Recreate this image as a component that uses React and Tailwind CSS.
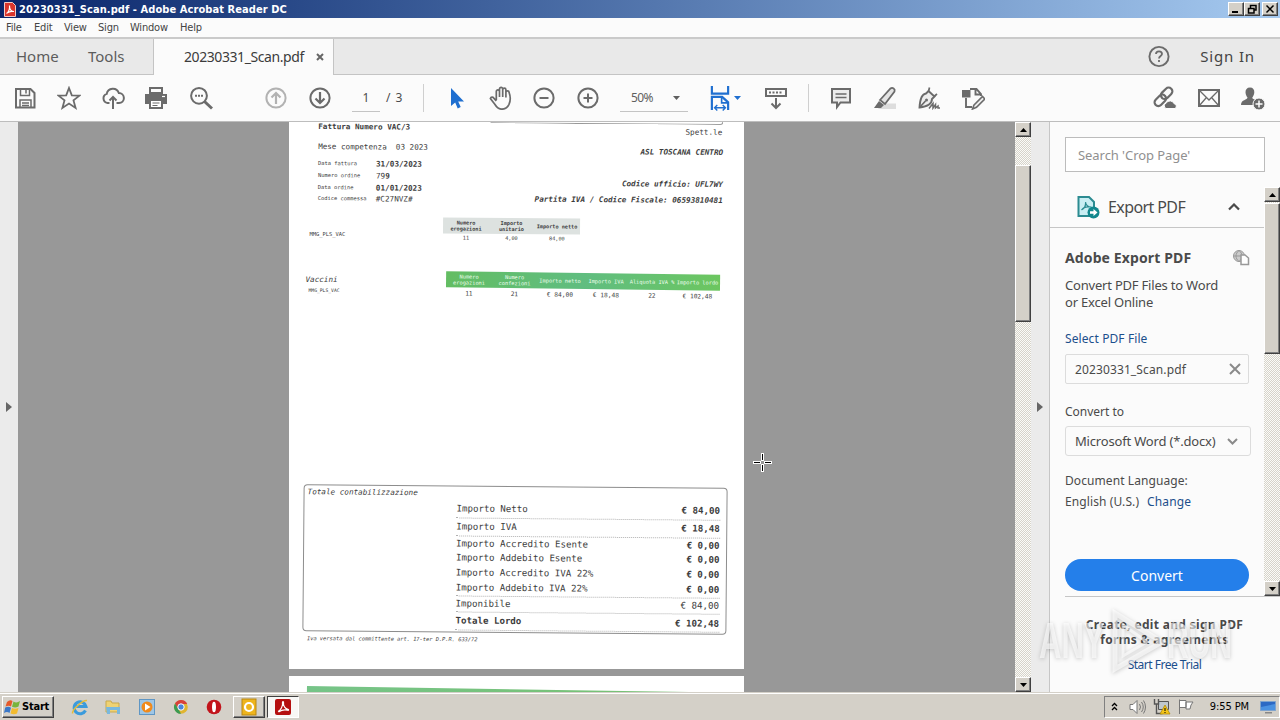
import React, { useState } from 'react';

const MENUS = [
  ['File', 'w-[28px]'],
  ['Edit', 'w-[30px]'],
  ['View', 'w-[34px]'],
  ['Sign', 'w-[32px]'],
  ['Window', 'w-[50px]'],
  ['Help', 'w-[30px]']
];

const TOTALS = [
  { label: 'Importo Netto', value: '€ 84,00', row: 'h-[18px] border-b', valueClass: 'font-bold' },
  { label: 'Importo IVA', value: '€ 18,48', row: 'h-[18px] border-b', valueClass: 'font-bold' },
  { label: 'Importo Accredito Esente', value: '€ 0,00', row: 'h-[14.300px]', valueClass: 'font-bold' },
  { label: 'Importo Addebito Esente', value: '€ 0,00', row: 'h-[15px]', valueClass: 'font-bold' },
  { label: 'Importo Accredito IVA 22%', value: '€ 0,00', row: 'h-[15px]', valueClass: 'font-bold' },
  { label: 'Importo Addebito IVA 22%', value: '€ 0,00', row: 'h-[15.700px] border-b', valueClass: 'font-bold' },
  { label: 'Imponibile', value: '€ 84,00', row: 'h-[16.500px] border-b', valueClass: '' },
  { label: 'Totale Lordo', value: '€ 102,48', row: 'h-[18px] border-b font-bold', valueClass: 'font-bold' }
];

const Svg = ({ size = 24, children, className = '' }) => (
  <svg
    width={size}
    height={size}
    viewBox="0 0 24 24"
    fill="none"
    stroke="#6b6b6b"
    strokeWidth="2"
    className={`shrink-0 ${className}`}
  >
    {children}
  </svg>
);

const Tool = ({ children, className = 'w-11' }) => (
  <button className={`flex h-full shrink-0 items-center justify-center ${className}`}>
    {children}
  </button>
);

const SaveIcon = () => (
  <Svg>
    <path d="M3 3h14.500l4 4v14.500H3z" />
    <path d="M7.500 3v6.500h9V3M13 4v3.500M7 21v-7h11v7M9 17h7M9 19.500h7" strokeWidth="1.500" />
  </Svg>
);

const StarIcon = () => (
  <Svg>
    <path d="M12 2l2.800 7.300 7.700.3-6 4.800 2.100 7.500L12 17.600l-6.600 4.300 2.100-7.500-6-4.800 7.700-.3z" strokeWidth="1.800" />
  </Svg>
);

const CloudIcon = () => (
  <Svg>
    <path d="M8.500 17H6.500A4.700 4.700 0 0 1 5.700 7.900A6.300 6.300 0 0 1 17.800 7A4.700 4.700 0 0 1 18 17h-2.500" />
    <path d="M12 23V11M8.500 14.500L12 11l3.500 3.500" />
  </Svg>
);

const PrintIcon = () => (
  <Svg>
    <path d="M6 2h12v5H6z" />
    <path d="M1 8h22v10h-4v-4H5v4H1z" fill="#6b6b6b" stroke="none" />
    <path d="M6 14h12v8H6z" fill="#fff" />
    <path d="M8.500 17h7M8.500 19.500h5" strokeWidth="1.200" />
    <path d="M18 10.500h3" stroke="#fff" strokeWidth="1.200" />
  </Svg>
);

const SearchIcon = () => (
  <Svg>
    <circle cx="10" cy="9.800" r="7.900" />
    <path d="M15.500 15.500l7.500 7" strokeWidth="3" />
    <path d="M6 9.800h2M9 9.800h2M12 9.800h2" />
  </Svg>
);

const CircleArrow = ({ up }) => (
  <Svg className={up ? 'rotate-180 opacity-50' : ''}>
    <circle cx="12" cy="12" r="9.600" />
    <path d="M12 6v11M7.500 12.500L12 17l4.500-4.500" strokeWidth="2.200" />
  </Svg>
);

const CursorIcon = () => (
  <Svg>
    <path d="M7 2v18l4.200-3.500 2.500 6 3-1.400-2.500-5.600H20z" fill="#1f6fd0" stroke="none" />
  </Svg>
);

const HandIcon = () => (
  <Svg>
    <path
      d="M7.500 14V5.500a1.600 1.600 0 0 1 3.200 0V11V3a1.600 1.600 0 0 1 3.200 0v8V3.800a1.600 1.600 0 0 1 3.200 0V11.500V6.500a1.600 1.600 0 0 1 3.200 0c1.500 4 1.700 8-.2 12.200C18.500 22 16 23.200 13 23.200c-3.500 0-5.300-2.200-7-5L1.600 12.500c.5-1.800 2.600-1.500 3.400-.4L7.500 15"
      transform="translate(.8 0)"
      strokeWidth="1.700"
    />
  </Svg>
);

const ZoomCircle = ({ plus }) => (
  <Svg>
    <circle cx="12" cy="12" r="9.600" />
    <path d="M7.500 12h9" />
    {plus && <path d="M12 7.500v9" />}
  </Svg>
);

const FitIcon = () => (
  <Svg size={26}>
    <g stroke="#1f6fd0">
      <path d="M4.500 1v7h15V1M4.500 23V11h9.500l5.500 5v7" />
      <path d="M13.500 11v5.500h6" strokeWidth="1.500" />
      <path d="M7 21h10M9.500 18.500L7 21l2.500 2.500M14.500 18.500L17 21l-2.500 2.500" strokeWidth="1.300" />
    </g>
  </Svg>
);

const RulerIcon = () => (
  <Svg>
    <path d="M2 3h20v7H2z" />
    <path d="M5 6.500h14" strokeDasharray="2 1.500" />
    <path d="M12 12v9M7.500 17.500L12 22l4.500-4.500" />
  </Svg>
);

const CommentIcon = () => (
  <Svg>
    <path d="M3 3h18v13.500H11.500L8 21v-4.500H3z" fill="#ececec" />
    <path d="M6.500 8h11M6.500 11.500h11" strokeWidth="1.300" />
  </Svg>
);

const HighlightIcon = () => (
  <Svg>
    <path d="M9 17.500h14V23H5z" fill="#ddd" stroke="none" />
    <path d="M7 14L17.500 2.500c2-1.500 5 .5 4 3L12 18z" fill="#e4e4e4" strokeWidth="1.800" />
    <path d="M6 15l5 4-3 3H1z" fill="#6b6b6b" stroke="none" />
  </Svg>
);

const PenIcon = () => (
  <Svg>
    <path d="M11.500 5l6 5.500-2.500 2.500c0 4.500-4 7.500-12.500 8.500.5-8.500 2-13.500 6.500-14z" fill="#eee" strokeWidth="1.900" />
    <path d="M3 21l5.500-6M12.500 1.500l-1 4M17 10.500l3-2.500" strokeWidth="1.700" />
    <circle cx="9.500" cy="14" r="1.500" fill="#6b6b6b" stroke="none" />
    <path d="M12 22.500l4-5v4.500l2.500-3.500v3.500l2.500-2v2h2" strokeWidth="1.500" />
  </Svg>
);

const EditPageIcon = () => (
  <Svg>
    <path d="M9 3h6.500L20 8v2M14.500 3v5.500H20M5 12v9h6" strokeWidth="1.900" />
    <path d="M1 4h8.500v7.500H1z" fill="#6b6b6b" stroke="none" />
    <path d="M13 19l8.500-8.500 2.300 2.500-8.300 8.300-4 1.700z" fill="#eee" strokeWidth="1.600" />
  </Svg>
);

const LinkCloudIcon = () => (
  <Svg>
    <g transform="rotate(-45 11 11)" strokeWidth="2.200">
      <rect x="-.5" y="7" width="13" height="7.500" rx="3.700" />
      <rect x="9" y="6.500" width="13" height="7.500" rx="3.700" />
    </g>
    <path d="M13 22.500a3 3 0 0 1 .2-5.500 4.500 4.500 0 0 1 8 .8 2.500 2.500 0 0 1 .8 4.700z" fill="#6b6b6b" stroke="#fbfbfb" strokeWidth="1" />
  </Svg>
);

const MailIcon = () => (
  <Svg>
    <path d="M2 4h20v16H2z" />
    <path d="M2.500 4.500L12 14l9.500-9.500M2.500 19.500L9 12M21.500 19.500L15 12" strokeWidth="1.300" />
  </Svg>
);

const AddUserIcon = () => (
  <Svg>
    <path d="M9 1.500c3 0 4.500 2 4.300 5-.2 2.600-1.300 4-2 5 0 2 3.700 2 5.200 4v3.500H0c0-5.500 6.500-5 6.500-7.500-.8-1-1.800-2.400-2-5-.2-3 1.500-5 4.500-5z" fill="#6b6b6b" stroke="none" />
    <circle cx="18" cy="18" r="6" fill="#6b6b6b" stroke="#fbfbfb" strokeWidth="1" />
    <path d="M18 14.500v7M14.500 18h7" stroke="#fff" strokeWidth="1.500" />
  </Svg>
);

const ExportIcon = () => (
  <svg width="24" height="26" viewBox="0 0 24 26" fill="none" className="shrink-0">
    <path d="M2.500 3h10.500l5 5v14H2.500z" fill="#c9eef3" stroke="#2c8b91" strokeWidth="2" />
    <path d="M5.500 16c3-1 4.500-5 4-8M9.500 8c.5 4 3 5 6 5M5.500 16c2-3 6-3.500 9-3" stroke="#2c8b91" strokeWidth="1.200" />
    <circle cx="17.500" cy="18.500" r="6" fill="#12878d" />
    <path d="M14 17.300h3.500V15l4 3.500-4 3.500v-2.300H14z" fill="#fff" />
  </svg>
);

const AcrobatGlyph = ({ className }) => (
  <svg viewBox="0 0 16 16" className={className}>
    <rect width="16" height="16" rx="2" fill="#b50f0f" />
    <path
      d="M3 12.500C6 11 8 7 7.500 3.500c-.2-1.300 1.200-1.300 1 0C8 7 10.500 10 13 10.300c1 .3.700 1.200-.5.900-3-.8-6-.2-9 1.700"
      fill="none"
      stroke="#fff"
      strokeWidth="1.200"
    />
  </svg>
);

const Triangle = ({ down, className = '' }) => (
  <svg width="7" height="4" viewBox="0 0 7 4" className={`shrink-0 ${down ? '' : 'rotate-180'} ${className}`}>
    <path d="M0 0h7L3.500 4z" fill="currentColor" />
  </svg>
);

const ScrollButton = ({ down }) => (
  <button className="flex h-[15px] w-4 shrink-0 items-center justify-center border border-t-white border-r-[#404040] border-b-[#404040] border-l-white bg-[#d4d0c8] text-black shadow-[inset_-1px_-1px_#808080]">
    <Triangle down={down} />
  </button>
);

const ScrollBar = ({ gap, thumb, className = '' }) => (
  <div
    className={`flex w-4 shrink-0 flex-col bg-[#e6e4dd] bg-[repeating-conic-gradient(#fbfbf8_0_25%,#d6d3ca_0_50%)] bg-[length:2px_2px] ${className}`}
  >
    <ScrollButton />
    <div className={`shrink-0 ${gap}`} />
    <div
      className={`shrink-0 border border-t-white border-r-[#404040] border-b-[#404040] border-l-white bg-[#d4d0c8] shadow-[inset_-1px_-1px_#808080] ${thumb}`}
    />
    <div className="flex-1" />
    <ScrollButton down />
  </div>
);

const WindowButton = ({ children }) => (
  <button className="flex h-[14px] w-4 items-center justify-center border border-t-white border-r-[#404040] border-b-[#404040] border-l-white bg-[#d4d0c8] shadow-[inset_-1px_-1px_#808080]">
    <svg width="10" height="10" viewBox="0 0 10 10" fill="none" stroke="#000" strokeWidth="1.500">
      {children}
    </svg>
  </button>
);

const TitleBar = () => (
  <div className="flex h-[18px] shrink-0 items-center bg-linear-to-r from-[#0a246a] to-[#a6caf0] pr-[2px] pl-1">
    <svg width="12" height="15" viewBox="0 0 12 15" fill="none">
      <path d="M.5.500h8l3 3v11H.5z" fill="#d9352c" stroke="#f3c9c5" />
      <path d="M2.500 11.500C5 10 6 6 5.500 3.500M5.500 5c.5 3 2 4.500 4.500 4.500M3 11c2-1.500 4-2 6.500-1.500" stroke="#fff" strokeWidth="1.200" />
    </svg>
    <span className="ml-[3px] flex-1 pt-px font-['DejaVu_Sans_Condensed','DejaVu_Sans',sans-serif] text-[11px] leading-[17px] font-bold tracking-[0.080px] text-white">
      20230331_Scan.pdf - Adobe Acrobat Reader DC
    </span>
    <WindowButton>
      <path d="M1 8h6" strokeWidth="2" />
    </WindowButton>
    <WindowButton>
      <path d="M3.500 4V1.500H9v4.500H7M1.500 4.500H7V9H1.500zM3 1.500h6M1 4.500h6" />
    </WindowButton>
    <div className="w-[2px]" />
    <WindowButton>
      <path d="M1.500 1.500l7 7M8.500 1.500l-7 7" />
    </WindowButton>
  </div>
);

const Toolbar = () => (
  <div className="flex h-[47px] shrink-0 items-center border-b border-[#bdbdbd] bg-[#fbfbfb] pl-[3px] font-['Noto_Sans',sans-serif] text-[12px] text-[#4b4b4b]">
    <Tool><SaveIcon /></Tool>
    <Tool><StarIcon /></Tool>
    <Tool><CloudIcon /></Tool>
    <Tool className="w-11 pr-[2px]"><PrintIcon /></Tool>
    <Tool><SearchIcon /></Tool>
    <div className="w-[31px]" />
    <Tool><CircleArrow up /></Tool>
    <Tool><CircleArrow /></Tool>
    <div className="ml-[10px] flex h-[27px] w-7 items-center justify-center border-b border-[#c4c4c4]">1</div>
    <span className="ml-[6px] w-[37px] [word-spacing:2px] whitespace-pre">/ 3</span>
    <div className="mr-[10px] h-7 w-px bg-[#cfcfcf]" />
    <Tool><CursorIcon /></Tool>
    <Tool><HandIcon /></Tool>
    <Tool><ZoomCircle /></Tool>
    <Tool><ZoomCircle plus /></Tool>
    <div className="ml-[10px] flex h-[27px] w-[68px] items-center justify-between border-b border-[#c4c4c4] pr-2 pl-[11px] text-[#5f5f5f]">
      <span className="tracking-[-0.6px]">50%</span>
      <Triangle down />
    </div>
    <Tool className="ml-[10px] w-14 gap-[1px] pr-[5px] text-[#1f6fd0]">
      <FitIcon />
      <Triangle down />
    </Tool>
    <Tool><RulerIcon /></Tool>
    <div className="mx-[10px] h-7 w-px bg-[#cfcfcf]" />
    <Tool><CommentIcon /></Tool>
    <Tool><HighlightIcon /></Tool>
    <Tool><PenIcon /></Tool>
    <Tool><EditPageIcon /></Tool>
    <div className="flex-1" />
    <Tool><LinkCloudIcon /></Tool>
    <Tool><MailIcon /></Tool>
    <Tool className="mr-[5px] w-11"><AddUserIcon /></Tool>
  </div>
);

const Field = ({ label, value, valueClass = 'font-bold' }) => (
  <div className="flex h-[11.700px] items-center">
    <span className="w-[58px] text-[5.400px]">{label}</span>
    <span className={`pt-[0.500px] text-[7.640px] ${valueClass}`}>{value}</span>
  </div>
);

const Invoice = () => (
  <div className="flex h-[547px] w-[455px] shrink-0 flex-col overflow-hidden bg-white font-['DejaVu_Sans_Mono',monospace] leading-none whitespace-pre text-[#3c3c3c]">
    <div className="flex h-[95px] shrink-0 pl-[29px]">
      <div className="w-[124px] origin-left rotate-[0.4deg]">
        <div className="h-[10px] text-[7.640px] leading-[10px] font-bold">Fattura Numero VAC/3</div>
        <div className="mt-[9.500px] mb-[6.500px] h-[10px] text-[7.600px] leading-[10px]">Mese competenza  03 2023</div>
        <Field label="Data fattura" value="31/03/2023" />
        <Field label="Numero ordine" value={<>79<b>9</b></>} valueClass="" />
        <Field label="Data ordine" value="01/01/2023" />
        <Field label="Codice commessa" value="#C27NVZ#" valueClass="" />
      </div>
      <div className="w-[286px] origin-right rotate-[0.4deg] pr-[5px] text-right text-[7.640px]">
        <div className="ml-12 h-[3px] rounded-br-[4px] border-r border-b border-[#999]" />
        <div className="h-4 pr-px leading-4">Spett.le</div>
        <div className="h-[23px] leading-[23px] font-bold italic">ASL TOSCANA CENTRO</div>
        <div className="mt-[13px] h-4 leading-4 font-bold italic">Codice ufficio: UFL7WY</div>
        <div className="h-4 leading-4 font-bold italic">Partita IVA / Codice Fiscale: 06593810481</div>
      </div>
    </div>

    <div className="flex h-[54px] shrink-0 pl-[21px]">
      <span className="mt-[15px] w-[133.500px] text-[5.400px]">MMG_PLS_VAC</span>
      <div className="mt-[0.500px] h-[26px] w-[137px] rotate-[0.5deg] text-center text-[5.200px]">
        <div className="flex h-4 items-center bg-[#dde2e0] leading-[6px] font-bold">
          <span className="w-[46px]">{'Numero\nerogazioni'}</span>
          <span className="w-[45px]">{'Importo\nunitario'}</span>
          <span className="w-[46px]">Importo netto</span>
        </div>
        <div className="flex h-[10px] items-center">
          <span className="w-[46px]">11</span>
          <span className="w-[45px]">4,00</span>
          <span className="w-[46px]">84,00</span>
        </div>
      </div>
    </div>

    <div className="flex h-[60px] shrink-0 pl-[17px]">
      <div className="w-[140.500px]">
        <div className="mt-[5px] h-[10px] text-[7.640px] italic">Vaccini</div>
        <div className="mt-[3px] pl-[3px] text-[4.700px]">MMG_PLS_VAC</div>
      </div>
      <div className="mt-[1.500px] h-[27px] w-[274px] rotate-[0.7deg] text-center">
        <div className="flex h-[15.500px] items-center bg-linear-to-r from-[#63bd62] via-[#60bd80] to-[#6cc65f] text-[5.300px] leading-[6px] text-[#f0fff0]">
          <span className="w-[46px]">{'Numero\nerogazioni'}</span>
          <span className="w-[45px]">{'Numero\nconfezioni'}</span>
          <span className="w-[46px]">Importo netto</span>
          <span className="w-[46px]">Importo IVA</span>
          <span className="w-[46px]">Aliquota IVA %</span>
          <span className="w-[45px]">Importo lordo</span>
        </div>
        <div className="flex h-[12.500px] items-center text-[6.200px]">
          <span className="w-[46px]">11</span>
          <span className="w-[45px]">21</span>
          <span className="w-[46px]">€ 84,00</span>
          <span className="w-[46px]">€ 18,48</span>
          <span className="w-[46px]">22</span>
          <span className="w-[45px]">€ 102,48</span>
        </div>
      </div>
    </div>

    <div className="mt-[154.500px] ml-[14.500px] h-[147px] w-[424px] shrink-0 rotate-[0.500deg] rounded-[4px] border border-[#8d8d8d]">
      <div className="h-[14px] pl-[3px] text-[7.640px] leading-[14px] italic">Totale contabilizzazione</div>
      <div className="ml-[152px] w-[263.500px] text-[9.140px]">
        {TOTALS.map((t) => (
          <div key={t.label} className={`flex items-center justify-between border-dotted border-[#b0b0b0] ${t.row}`}>
            <span>{t.label}</span>
            <span className={`pt-[0.500px] ${t.valueClass}`}>{t.value}</span>
          </div>
        ))}
      </div>
    </div>
    <div className="mt-[1.500px] h-2 w-[200px] origin-left rotate-[0.4deg] pl-[18px] text-[5.350px] leading-[8px] italic">
      Iva versata dal committente art. 17-ter D.P.R. 633/72
    </div>
  </div>
);

const ExportPanel = () => {
  const [file] = useState('20230331_Scan.pdf');

  return (
    <div className="flex w-[231px] shrink-0 flex-col border-l border-[#c6c6c6] bg-[#fbfbfb] font-['Noto_Sans',sans-serif] text-[12px] leading-[17px] text-[#4a4a4a]">
      <div className="mt-[15px] ml-[15px] flex h-[35px] w-[200px] shrink-0 items-center border border-[#bcbcbc] bg-white pt-px pl-3 text-[13px] tracking-[-0.060px] text-[#909090]">
        Search 'Crop Page'
      </div>
      <div className="mt-[15px] flex h-[409px] shrink-0">
        <div className="flex w-[214px] flex-col">
          <div className="flex h-[41px] shrink-0 items-center border-b border-[#c6c6c6] pl-[26px]">
            <ExportIcon />
            <span className="ml-[8px] pt-px text-[16px] tracking-[-0.600px]">Export PDF</span>
            <svg width="12" height="8" viewBox="0 0 12 8" className="ml-auto mr-[24px]" fill="none" stroke="#4a4a4a" strokeWidth="2.200">
              <path d="M1 6.500l5-5 5 5" />
            </svg>
          </div>
          <div className="flex flex-1 flex-col pl-[15px]">
            <div className="mt-[19px] mb-px flex h-5 items-center justify-between pr-[14px]">
              <span className="text-[14px] font-bold tracking-[0.120px]">Adobe Export PDF</span>
              <svg width="18" height="17" viewBox="0 0 18 17" fill="none" stroke="#999">
                <circle cx="7" cy="7" r="5.500" fill="#ccc" />
                <path d="M1.500 7h11M7 1.500c-4 3-4 8 0 11M7 1.500c4 3 4 8 0 11" />
                <path d="M9 6h4l3.500 3v6.500H9z" fill="#fff" strokeWidth="1.500" />
              </svg>
            </div>
            <p className="mt-[9px] text-[13px] tracking-[-0.200px]">Convert PDF Files to Word<br />or Excel Online</p>
            <a className="mt-[19px] tracking-[0.100px] text-[#1c4f8c]">Select PDF File</a>
            <div className="mt-[7px] flex h-[30px] w-[184px] shrink-0 items-center justify-between rounded-[2px] border border-[#dcdcdc] pr-[7px] pl-[9px]">
              <span className="tracking-[0.120px]">{file}</span>
              <svg width="12" height="12" viewBox="0 0 12 12" stroke="#8a8a8a" strokeWidth="2">
                <path d="M1 1l10 10M11 1L1 11" />
              </svg>
            </div>
            <span className="mt-[19px]">Convert to</span>
            <div className="mt-[6px] flex h-[30px] w-[186px] shrink-0 items-center justify-between rounded-[3px] border border-[#dcdcdc] pr-3 pl-[9px] text-[13px]">
              <span className="pt-px tracking-[-0.180px]">Microsoft Word (*.docx)</span>
              <svg width="11" height="7" viewBox="0 0 11 7" fill="none" stroke="#8a8a8a" strokeWidth="2">
                <path d="M1 1l4.500 4.500L10 1" />
              </svg>
            </div>
            <span className="mt-[16px] tracking-[0.080px]">Document Language:</span>
            <div className="mt-1 flex gap-2 tracking-[0.100px]">
              <span>English (U.S.)</span>
              <a className="text-[#1c4f8c]">Change</a>
            </div>
            <button className="mt-auto mb-[5px] h-8 w-[184px] shrink-0 rounded-full bg-[#247fea] text-[14px] text-white">
              Convert
            </button>
          </div>
        </div>
        <ScrollBar gap="h-px" thumb="h-[151px]" className="h-[409px]" />
      </div>
      <div className="ml-[15px] flex flex-1 flex-col border-t border-[#c6c6c6] pt-5 text-center leading-[15px]">
        <p className="w-[199px] font-bold tracking-[0.320px]">Create, edit and sign PDF<br />forms &amp; agreements</p>
        <a className="mt-[10px] w-[199px] tracking-[-0.500px] text-[#1c4f8c]">Start Free Trial</a>
      </div>
    </div>
  );
};

const TaskIcon = ({ children, className = '' }) => (
  <div className={`flex h-[23px] items-center justify-center ${className}`}>
    <svg width="18" height="18" viewBox="0 0 18 18" fill="none">{children}</svg>
  </div>
);

const Taskbar = () => (
  <div className="flex h-[28px] shrink-0 items-center border-t border-[#d4d0c8] bg-[#d4d0c8] pl-[2px] shadow-[inset_0_1px_white]">
    <button className="flex h-[22px] w-[52px] items-center border border-t-white border-r-[#404040] border-b-[#404040] border-l-white pl-px shadow-[inset_-1px_-1px_#808080]">
      <svg width="17" height="16" viewBox="0 0 17 16">
        <path d="M3 3q3-3 5.500-1L7 7.500Q5 6 1.500 7.500z" fill="#e55a2b" />
        <path d="M9.500 2.500q3 2 6.500-.5L14.500 7.500q-3 2-6.500.3z" fill="#78b43c" />
        <path d="M1.200 8.500Q4.500 7 7 8.700L5.500 14q-2.500-2-5.500 0z" fill="#3b78c8" />
        <path d="M8 9q3 1.500 6.500 0L13 14.500q-3 1.500-6.500 0z" fill="#f3bb2e" />
      </svg>
      <span className="ml-px pt-[2px] font-['DejaVu_Sans_Condensed','DejaVu_Sans',sans-serif] text-[11px] font-bold tracking-[-0.2px] text-black">Start</span>
    </button>
    <TaskIcon className="ml-[9px] w-[33px]">
      <path d="M14.500 12.500A6 6 0 1 1 15 8.500H5" stroke="#3b9bdc" strokeWidth="3" />
      <path d="M1.500 15.500C1 12 11 2 16 2.500" stroke="#e5bc3a" strokeWidth="1.500" />
    </TaskIcon>
    <TaskIcon className="w-[34px]">
      <path d="M2 3h5l1 2h7v9H2z" fill="#efd273" stroke="#c9a94c" />
      <path d="M2 9h14v7h-3v-4H6v4H3z" fill="#79b8de" />
    </TaskIcon>
    <TaskIcon className="w-[34px]">
      <rect x="1.500" y="1.500" width="15" height="15" fill="#9ec6e6" stroke="#5f96c4" />
      <circle cx="9" cy="9" r="5.500" fill="#f08a1c" />
      <path d="M7 5.500l5.500 3.500L7 12.500z" fill="#fff" />
    </TaskIcon>
    <TaskIcon className="w-[33px]">
      <circle cx="9" cy="9" r="6.800" fill="#e0b530" />
      <path d="M3 5.500A6.800 6.800 0 0 1 15.200 6H9L6 11z" fill="#d8413a" />
      <path d="M3 5.500L7.500 13 9 15.800A6.800 6.800 0 0 1 3 5.500z" fill="#3b9a52" />
      <circle cx="9" cy="9" r="3.200" fill="#4a86dc" stroke="#fff" />
    </TaskIcon>
    <TaskIcon className="w-[34px]">
      <circle cx="9" cy="9" r="7.300" fill="#c2141b" />
      <ellipse cx="9" cy="9" rx="2" ry="5.300" fill="#fff" />
    </TaskIcon>
    <TaskIcon className="ml-[2px] h-[22px]! w-8 border border-t-white border-r-[#404040] border-b-[#404040] border-l-white shadow-[inset_-1px_-1px_#808080]">
      <rect x="2" y="1" width="14" height="16" fill="#efb51c" stroke="#b88715" />
      <circle cx="9" cy="9" r="4" stroke="#fff" strokeWidth="2.200" />
    </TaskIcon>
    <div className="ml-[2px] flex h-[22px] w-8 items-center justify-center border border-t-[#404040] border-r-white border-b-white border-l-[#404040] bg-[#f8f7f5]">
      <AcrobatGlyph className="h-4 w-4" />
    </div>
    <div className="ml-auto flex h-[22px] items-center border border-t-[#808080] border-r-white border-b-white border-l-[#808080] pr-[3px] pl-[6px]">
      <svg width="7" height="9" viewBox="0 0 7 9" fill="none" stroke="#000" strokeWidth="1.300">
        <path d="M1 4l2.500-2.500L6 4M1 8l2.500-2.500L6 8" />
      </svg>
      <svg width="18" height="16" viewBox="0 0 18 16" fill="none" stroke="#777" className="ml-[11px]">
        <path d="M1 5.500h3L8 1.500v13l-4-4H1z" fill="#fff" />
        <path d="M10.500 5q2 3 0 6M12.500 3q3.500 5 0 10M14.500 1.500q4 6.500 0 13" />
      </svg>
      <svg width="18" height="18" viewBox="0 0 18 18" fill="none" className="ml-[6px]">
        <path d="M5.500 3.500h10v8h-10z" fill="#bfc7cd" stroke="#555" />
        <path d="M1.500 1v5h4V1M3.500 6v9.500h6" stroke="#555" strokeWidth="1.400" />
        <path d="M12 7l5 9H7z" fill="#f5c518" stroke="#a98100" strokeWidth=".7" />
        <path d="M12 10v3M12 14v1" stroke="#000" />
      </svg>
      <svg width="18" height="17" viewBox="0 0 18 17" fill="#fff" stroke="#777" className="ml-[6px]">
        <path d="M2.500 16V1.500M3 2.500h6v7H3M9 4h7l-2 3-1 4H9z" />
      </svg>
      <span className="ml-[15px] pt-[2px] font-['DejaVu_Sans_Condensed','DejaVu_Sans',sans-serif] text-[11px] tracking-[-0.100px] text-black">9:55 PM</span>
      <svg width="16" height="16" viewBox="0 0 16 16" className="ml-[11px]">
        <path d="M.5 2.500h15v9H.5z" fill="#2c69c4" stroke="#7fa3cd" />
        <path d="M1 8l14-3v6H1z" fill="#4a91e1" />
        <path d="M5 13h7v1.500H5z" fill="#888" />
      </svg>
    </div>
  </div>
);

// Translucent logo laid over the lower right corner
const Watermark = () => (
  <div className="pointer-events-none absolute top-[608px] left-[1039px] flex h-[66px] w-[194px] items-center font-['Liberation_Sans',sans-serif] text-[50px] font-bold text-white/60 drop-shadow-[0_1px_2px_rgba(0,0,0,0.32)]">
    <span className="w-[70px] origin-left scale-x-[0.62]">ANY</span>
    <svg width="58" height="66" viewBox="0 0 58 66" fill="none" stroke="#fff" strokeOpacity=".6" strokeWidth="5" className="shrink-0">
      <path d="M6 5v56l47-27z" />
      <path d="M14 17v31l24-14z" strokeWidth="3" />
    </svg>
    <span className="w-[60px] origin-left scale-x-[0.6]">RUN</span>
  </div>
);

const App = () => (
  <div className="relative flex h-[720px] w-[1280px] flex-col overflow-hidden bg-[#fbfbfb]">
    <TitleBar />
    <div className="flex h-[19px] shrink-0 items-center pt-[2px] pl-[6px] font-['DejaVu_Sans_Condensed','DejaVu_Sans',sans-serif] text-[11px] tracking-[-0.2px] text-[#444]">
      {MENUS.map(([name, width]) => (
        <span key={name} className={`shrink-0 ${width}`}>{name}</span>
      ))}
    </div>

    <div className="flex h-[38px] shrink-0 border-t-2 border-[#cacaca] bg-[#e9e9e9] font-['Noto_Sans',sans-serif] text-[15px] text-[#5c5c5c]">
      <div className="flex w-[154px] items-center border-r border-b border-[#c4c4c4] pl-4">
        <span className="w-[72px]">Home</span>
        <span>Tools</span>
      </div>
      <div className="flex w-[179px] items-center bg-[#fbfbfb] pl-[30px] text-[14px] text-[#3c3c3c]">
        <span className="w-[120px] pb-px tracking-[-0.420px]">20230331_Scan.pdf</span>
        <svg width="8" height="8" viewBox="0 0 8 8" stroke="#666" strokeWidth="2" className="ml-[12px]">
          <path d="M1 1l6 6M7 1L1 7" />
        </svg>
      </div>
      <div className="flex flex-1 items-center justify-end border-b border-l border-[#c4c4c4] pr-[25px]">
        <Svg>
          <circle cx="12" cy="11.500" r="9.600" strokeWidth="1.900" />
          <path d="M9 9c0-3.500 6-3.500 6 0 0 2-3 2-3 4.500M12 15v2" strokeWidth="1.800" />
        </Svg>
        <span className="ml-[29px] tracking-[0.850px] text-[#444]">Sign In</span>
      </div>
    </div>

    <Toolbar />

    <div className="flex h-[570px] shrink-0">
      <div className="flex w-[18px] items-center justify-center bg-[#ebebeb]">
        <svg width="6" height="10" viewBox="0 0 6 10"><path d="M0 0l6 5-6 5z" fill="#666" /></svg>
      </div>
      <div className="flex w-[997px] flex-col gap-[7px] overflow-hidden bg-[#989898] pl-[270.500px]">
        <Invoice />
        <div className="h-[16px] w-[455px] shrink-0 overflow-hidden bg-white pt-[10px] pl-[18px]">
          <div className="h-3 w-[420px] origin-top-left rotate-[0.900deg] bg-linear-to-r from-[#76c488] to-[#78c070]" />
        </div>
      </div>
      <ScrollBar gap="h-7" thumb="h-[157px]" />
      <div className="flex w-[18px] items-center justify-center bg-[#ebebeb]">
        <svg width="6" height="10" viewBox="0 0 6 10"><path d="M0 0l6 5-6 5z" fill="#666" /></svg>
      </div>
      <ExportPanel />
    </div>

    <Taskbar />
    <Watermark />

    <svg width="20" height="20" viewBox="0 0 20 20" className="absolute top-[453px] left-[753px]">
      <path d="M9.500 0v8M9.500 11v8M0 9.500h8M11 9.500h8" stroke="#fff" strokeWidth="3" />
      <path d="M9.500 1v6M9.500 12v6M1 9.500h6M12 9.500h6" stroke="#000" />
    </svg>
  </div>
);

export default App;
